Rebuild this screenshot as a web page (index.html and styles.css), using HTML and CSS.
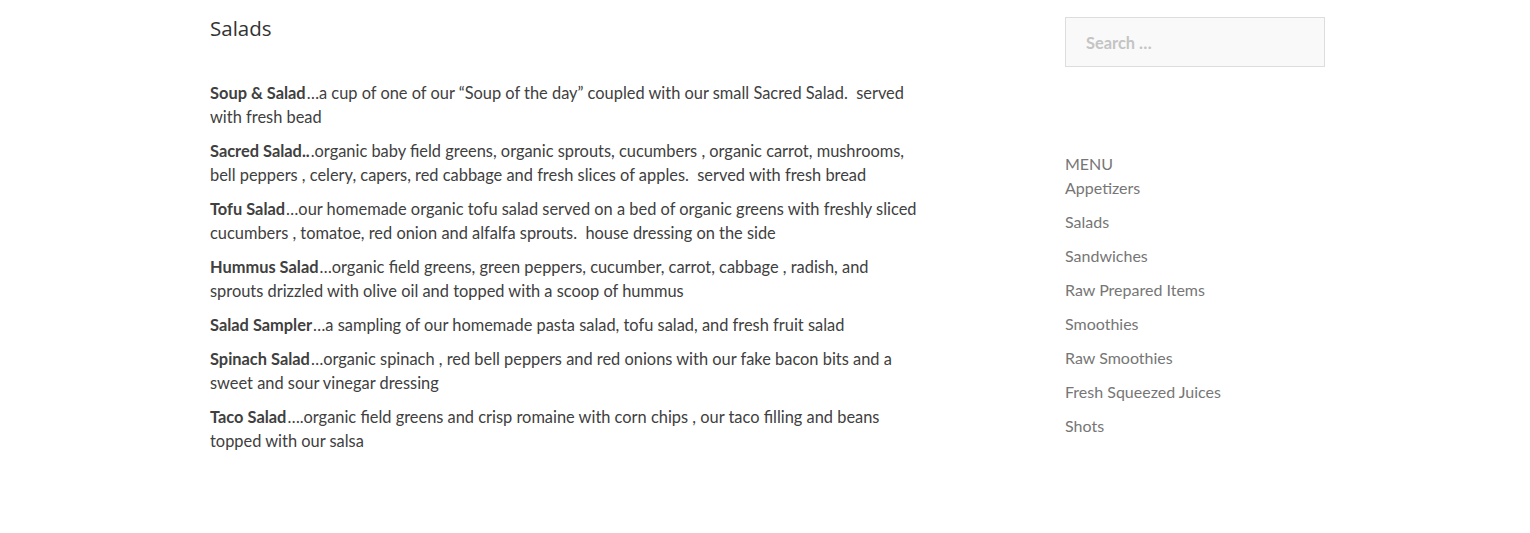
FILE: index.html
```html
<!DOCTYPE html>
<html>
<head>
<meta charset="utf-8">
<link rel="stylesheet" href="styles.css">
</head>
<body>
<div class="page">
  <main class="content">
    <h1 class="title">Salads</h1>
    <p><strong>Soup &amp; Salad</strong>…a cup of one of our “Soup of the day” coupled with our small Sacred Salad.&nbsp; served with fresh bead</p>
    <p><strong>Sacred Salad..</strong>.organic baby field greens, organic sprouts, cucumbers , organic carrot, mushrooms, bell peppers , celery, capers, red cabbage and fresh slices of apples.&nbsp; served with fresh bread</p>
    <p><strong>Tofu Salad</strong>…our homemade organic tofu salad served on a bed of organic greens with freshly sliced cucumbers , tomatoe, red onion and alfalfa sprouts.&nbsp; house dressing on the side</p>
    <p><strong>Hummus Salad</strong>…organic field greens, green peppers, cucumber, carrot, cabbage , radish, and sprouts drizzled with olive oil and topped with a scoop of hummus</p>
    <p><strong>Salad Sampler</strong>…a sampling of our homemade pasta salad, tofu salad, and fresh fruit salad</p>
    <p><strong>Spinach Salad</strong>…organic spinach , red bell peppers and red onions with our fake bacon bits and a sweet and sour vinegar dressing</p>
    <p><strong>Taco Salad</strong>….organic field greens and crisp romaine with corn chips , our taco filling and beans topped with our salsa</p>
  </main>
  <aside class="sidebar">
    <form class="search"><input class="search-field" type="search" placeholder="Search …"></form>
    <section class="menu">
      <h2 class="menu-title">MENU</h2>
      <ul class="menu-list">
        <li><a href="#">Appetizers</a></li>
        <li><a href="#">Salads</a></li>
        <li><a href="#">Sandwiches</a></li>
        <li><a href="#">Raw Prepared Items</a></li>
        <li><a href="#">Smoothies</a></li>
        <li><a href="#">Raw Smoothies</a></li>
        <li><a href="#">Fresh Squeezed Juices</a></li>
        <li><a href="#">Shots</a></li>
      </ul>
    </section>
  </aside>
</div>
</body>
</html>
```

FILE: styles.css
```css
html, body {
  margin: 0;
  padding: 0;
  background: #ffffff;
}
body {
  font-family: "Lato", "Noto Sans", sans-serif;
  font-size: 16px;
  line-height: 24px;
  color: #404040;
}
.page {
  display: flex;
  align-items: flex-start;
  padding: 17px 0 0 210px;
}
.content {
  width: 710px;
  font-size: 16.4px;
}
.title {
  font-family: "Open Sans", "Lato", sans-serif;
  font-size: 20.5px;
  font-weight: 500;
  line-height: 24px;
  color: #333333;
  margin: -1px 0 41px;
}
.content p {
  margin: 0 0 10px;
}
.content strong {
  font-weight: 700;
  margin-right: 1px;
}
.sidebar {
  width: 260px;
  margin-left: 145px;
}
.search {
  margin: 0;
}
.search-field {
  box-sizing: border-box;
  width: 260px;
  height: 50px;
  border: 1px solid #dddddd;
  background: #f9f9f9;
  padding: 0 20px;
  font-family: inherit;
  font-size: 16.4px;
  color: #404040;
  outline: none;
  border-radius: 0;
  -webkit-appearance: none;
}
.search-field::placeholder {
  color: #c4c4c4;
  font-weight: 700;
}
.menu {
  margin-top: 85px;
}
.menu-title {
  margin: 0;
  font-size: 16px;
  font-weight: 400;
  line-height: 24px;
  color: #767676;
}
.menu-list {
  list-style: none;
  margin: 0;
  padding: 0;
}
.menu-list li {
  margin: 0 0 10px;
}
.menu-list a {
  color: #767676;
  text-decoration: none;
}
```
